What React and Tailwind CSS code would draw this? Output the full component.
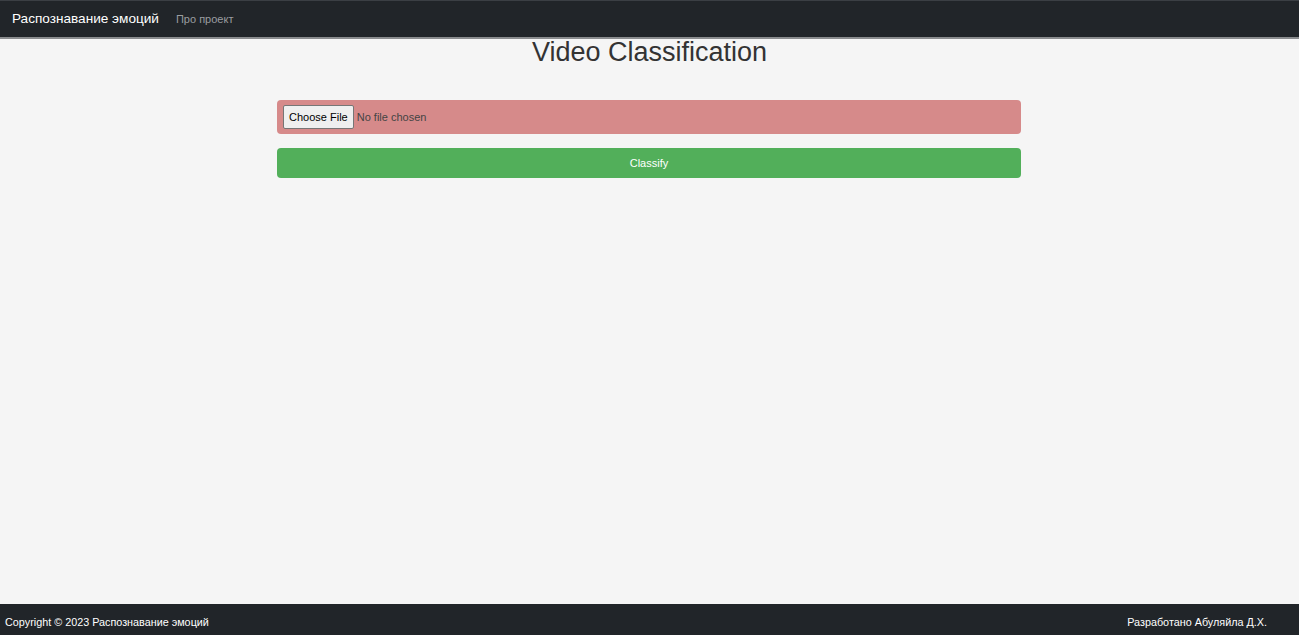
export default function App() {
  return (
    <div className="min-h-[635px] flex flex-col bg-[#f5f5f5]" style={{ fontFamily: '"Liberation Sans", Arial, sans-serif' }}>
      <nav className="h-[39px] bg-[#212529] border-t border-t-[#3b3f44] border-b-2 border-b-[#8a8c8e] flex items-center px-3 shrink-0">
        <span className="text-white text-[13.6px] mr-[17px]">Распознавание эмоций</span>
        <span className="text-[#9a9da0] text-[11px]">Про проект</span>
      </nav>
      <main className="flex-1 flex flex-col items-center">
        <h1 className="text-[27px] leading-[28px] text-[#333] mt-[-1px]">Video Classification</h1>
        <div className="w-[744px] mr-[1px] mt-[34px] h-[34px] bg-[#d68a8a] rounded-[4px] flex items-center px-[6px]">
          <input type="file" className="text-[11px] text-[#444] file:mr-[3px] file:px-[5px] file:py-[3px] file:bg-[#efefef] file:border file:border-[#767676] file:rounded-[2px] file:text-[11px] file:text-black" />
        </div>
        <button className="w-[744px] mr-[1px] mt-[14px] h-[30px] bg-[#52af5a] rounded-[4px] text-white text-[11px]">Classify</button>
      </main>
      <footer className="h-[31px] bg-[#212529] flex items-center justify-between pl-[5px] pr-[32px] text-white text-[10.8px] shrink-0">
        <span className="pt-[6px]">Copyright © 2023 Распознавание эмоций</span>
        <span className="pt-[6px]">Разработано Абуляйла Д.Х.</span>
      </footer>
    </div>
  );
}
